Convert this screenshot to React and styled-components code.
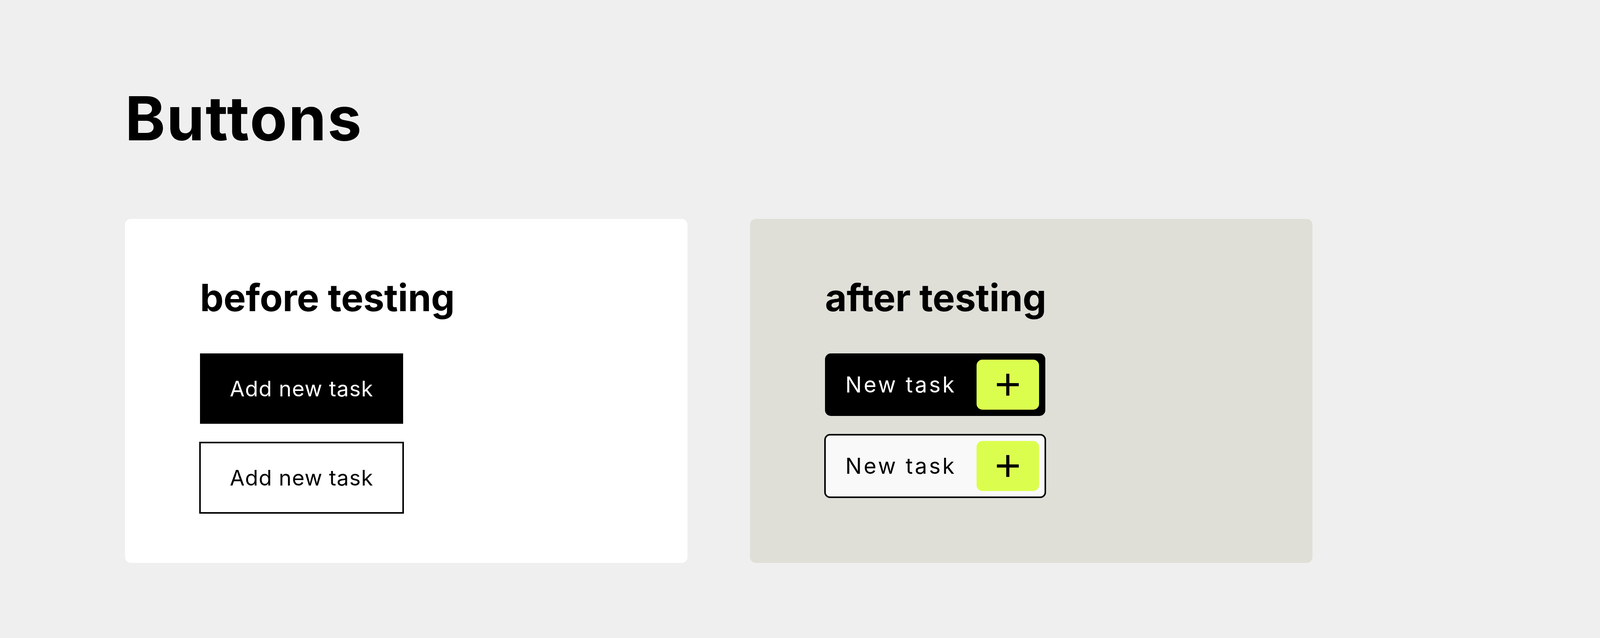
import React from "react";
import styled, { createGlobalStyle } from "styled-components";

const GlobalStyle = createGlobalStyle`
	* {
		box-sizing: border-box;
	}
	body {
		margin: 0;
		background-color: #efefef;
		font-family: Inter, "Liberation Sans", sans-serif;
		color: #000;
	}
`;

const PlusIcon = () => (
	<svg width='56' height='56' viewBox='0 0 56 56' fill='none'>
		<path d='M28 0V56M0 28H56' stroke='#000' strokeWidth='8' />
	</svg>
);

const App = () => {
	return (
		<Page>
			<GlobalStyle />
			<Title>Buttons</Title>

			<Cards>
				<Card bg='#ffffff'>
					<CardTitle>before testing</CardTitle>
					<Stack gap='46px'>
						<OldButton>Add new task</OldButton>
						<OldButton outline>Add new task</OldButton>
					</Stack>
				</Card>

				<Card bg='#dfdfd8'>
					<CardTitle>after testing</CardTitle>
					<Stack gap='46px'>
						<NewButton>
							<Label>New task</Label>
							<IconBox>
								<PlusIcon />
							</IconBox>
						</NewButton>
						<NewButton outline>
							<Label>New task</Label>
							<IconBox>
								<PlusIcon />
							</IconBox>
						</NewButton>
					</Stack>
				</Card>
			</Cards>
		</Page>
	);
};

export default App;

const Page = styled.div`
	min-height: 100vh;
	padding: 225px 320px 192px;
`;

const Title = styled.h1`
	margin: 0 0 179px;
	font-size: 156px;
	font-weight: 700;
	line-height: 1;
	letter-spacing: 3px;
`;

const Cards = styled.div`
	display: flex;
	gap: 160px;
`;

const Card = styled.div`
	width: 1440px;
	height: 880px;
	padding: 153px 192px 0;
	background-color: ${({ bg }) => bg};
	border-radius: 15px;
`;

const CardTitle = styled.h2`
	margin: 0 0 95px;
	font-size: 96px;
	font-weight: 700;
	line-height: 1;
	letter-spacing: -0.3px;
`;

const Stack = styled.div`
	display: flex;
	flex-direction: column;
	align-items: flex-start;
	gap: ${({ gap }) => gap};
`;

const OldButton = styled.button`
	width: ${({ outline }) => (outline ? "524px" : "520px")};
	height: ${({ outline }) => (outline ? "184px" : "180px")};
	margin: ${({ outline }) => (outline ? "0 -2px" : "0")};
	display: flex;
	justify-content: center;
	align-items: center;
	padding: 0;
	border: ${({ outline }) => (outline ? "4px solid #000" : "none")};
	border-radius: 0;
	background-color: ${({ outline }) => (outline ? "#fff" : "#000")};
	color: ${({ outline }) => (outline ? "#000" : "#fff")};
	font-family: Inter, "Liberation Sans", sans-serif;
	font-size: 55px;
	font-weight: 400;
	letter-spacing: 1.2px;
	cursor: pointer;
`;

const NewButton = styled.button`
	width: ${({ outline }) => (outline ? "568px" : "564px")};
	height: ${({ outline }) => (outline ? "164px" : "160px")};
	margin: ${({ outline }) => (outline ? "0 -2px" : "0")};
	display: flex;
	align-items: center;
	padding: ${({ outline }) => (outline ? "14px 14px 14px 50px" : "16px 16px 16px 52px")};
	border: ${({ outline }) => (outline ? "4px solid #000" : "none")};
	border-radius: 15px;
	background-color: ${({ outline }) => (outline ? "#f9f9f9" : "#000")};
	color: ${({ outline }) => (outline ? "#000" : "#fff")};
	cursor: pointer;
`;

const Label = styled.span`
	font-family: Inter, "Liberation Sans", sans-serif;
	font-size: 56px;
	font-weight: 400;
	letter-spacing: 4.8px;
`;

const IconBox = styled.div`
	margin-left: auto;
	width: 160px;
	height: 128px;
	display: flex;
	justify-content: center;
	align-items: center;
	background-color: #dbfe4e;
	border-radius: 15px;
`;
